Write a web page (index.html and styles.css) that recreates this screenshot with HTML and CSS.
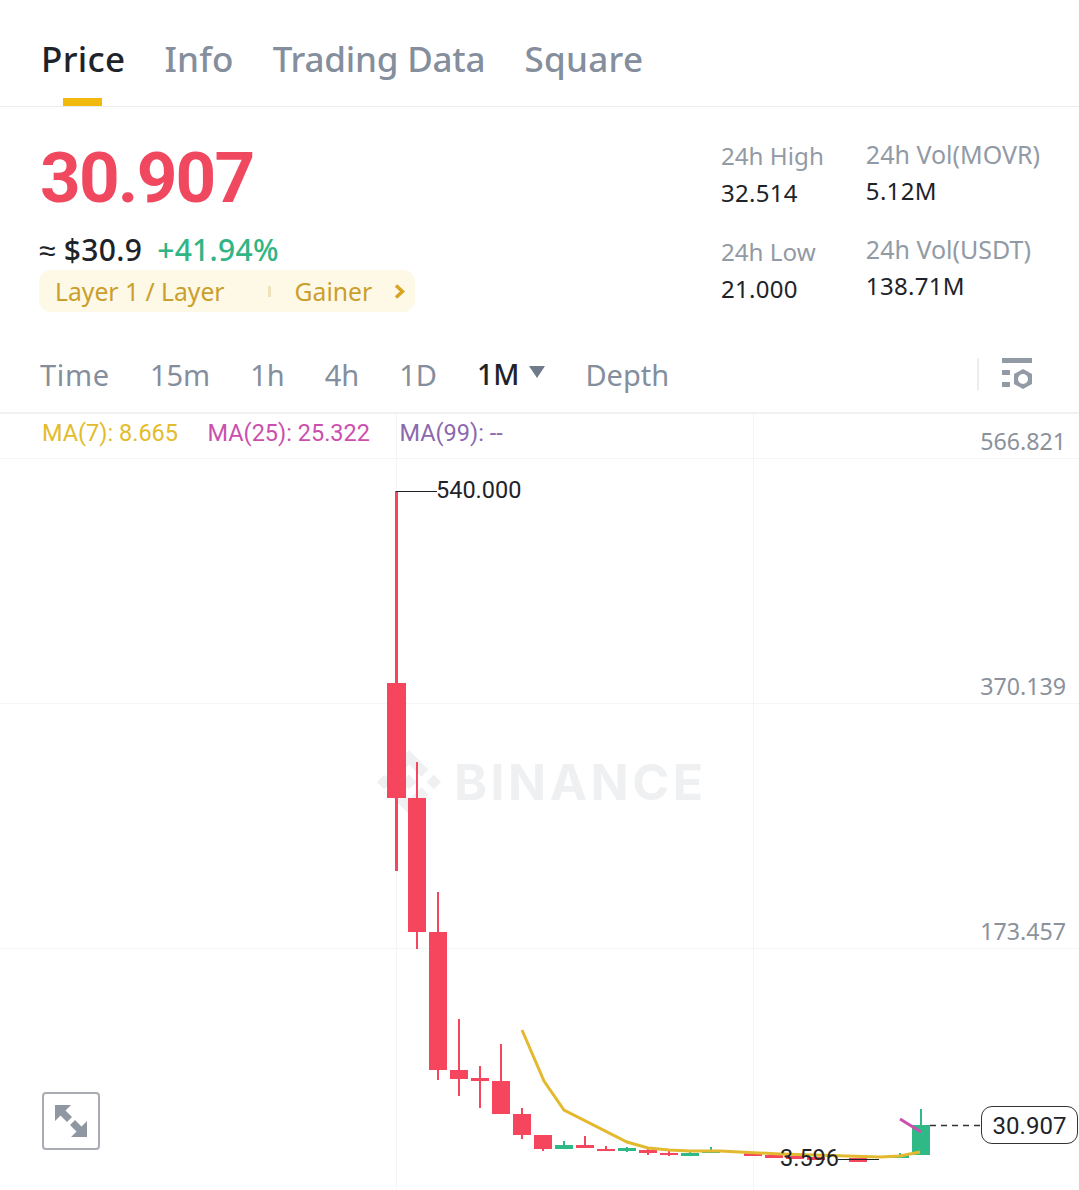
FILE: index.html
```html
<!DOCTYPE html>
<html lang="en">

<head>
    <meta charset="UTF-8">
    <meta name="viewport" content="width=device-width, initial-scale=1.0">
    <title>MOVR/USDT</title>
    <link rel="stylesheet" href="styles.css">
</head>

<body>
    <nav class="tabs">
        <a class="tab active">Price</a>
        <a class="tab">Info</a>
        <a class="tab tab-long">Trading Data</a>
        <a class="tab">Square</a>
    </nav>

    <section class="summary">
        <div class="summary-left">
            <div class="last-price">30.907</div>
            <div class="fiat-row">
                <span class="fiat">≈ $30.9</span>
                <span class="change">+41.94%</span>
            </div>
            <div class="tags">
                <span>Layer 1 / Layer</span>
                <i class="tag-sep"></i>
                <span>Gainer</span>
                <svg class="tag-arrow" width="11" height="15" viewBox="0 0 11 15">
                    <path d="M2 1.500l6.500 6-6.500 6" fill="none" stroke="#d9a520" stroke-width="3.500"/>
                </svg>
            </div>
        </div>
        <div class="stats">
            <div class="stat-col stat-col-low">
                <div class="stat">
                    <div class="stat-label">24h High</div>
                    <div class="stat-value">32.514</div>
                </div>
                <div class="stat">
                    <div class="stat-label">24h Low</div>
                    <div class="stat-value">21.000</div>
                </div>
            </div>
            <div class="stat-col">
                <div class="stat">
                    <div class="stat-label">24h Vol(MOVR)</div>
                    <div class="stat-value">5.12M</div>
                </div>
                <div class="stat">
                    <div class="stat-label">24h Vol(USDT)</div>
                    <div class="stat-value">138.71M</div>
                </div>
            </div>
        </div>
    </section>

    <div class="toolbar">
        <a class="period period-time">Time</a>
        <a class="period">15m</a>
        <a class="period">1h</a>
        <a class="period">4h</a>
        <a class="period">1D</a>
        <a class="period selected">1M<i class="caret"></i></a>
        <a class="period">Depth</a>
        <div class="toolbar-right">
            <svg width="32" height="32" viewBox="0 0 32 32">
                <path d="M1 0h30v5H1zM1 12h8v5H1zM1 24h8v5H1z" fill="#929aa5"/>
                <path d="M22 11l9 5v10l-9 5-9-5V16z" fill="#929aa5"/>
                <circle cx="22" cy="21" r="5" fill="#fff"/>
            </svg>
        </div>
    </div>

    <div class="chart">
        <div class="legend">
            <span class="ma7">MA(7): 8.665</span>
            <span class="ma25">MA(25): 25.322</span>
            <span class="ma99">MA(99): --</span>
        </div>

        <!-- viewBox uses page coordinates -->
        <svg class="plot" width="1079" height="776" viewBox="0 414 1079 776">
            <path class="grid" d="M0 458.5H1079M0 703.5H1079M0 948.5H1079M396.5 414V1190M753.5 414V1190"/>

            <path class="mark" transform="translate(377 750) scale(2)" d="M9.8 13.4L16 7.2l6.2 6.2 3.6-3.6L16 0 6.2 9.8l3.6 3.6zM0 16l3.6-3.6L7.2 16l-3.6 3.6L0 16zm9.8 2.6L16 24.8l6.2-6.2 3.6 3.6L16 32l-9.8-9.8 3.6-3.6zM24.8 16l3.6-3.6L32 16l-3.6 3.6-3.6-3.6zm-5.1 0L16 12.3 12.3 16l3.7 3.7 3.7-3.7z"/>
            <text class="mark-text" x="454" y="800">BINANCE</text>

            <g class="down">
                <rect x="395" y="491" width="3" height="380"/><rect x="387" y="683" width="19" height="115"/>
                <rect x="416" y="762" width="2" height="187"/><rect x="408" y="798" width="18" height="134"/>
                <rect x="437" y="892" width="2" height="188"/><rect x="429" y="932" width="18" height="138"/>
                <rect x="458" y="1019" width="2" height="77"/><rect x="450" y="1070" width="18" height="9"/>
                <rect x="479" y="1066" width="2" height="42"/><rect x="471" y="1078" width="18" height="3"/>
                <rect x="500" y="1044" width="2" height="40"/><rect x="492" y="1081" width="18" height="33"/>
                <rect x="521" y="1108" width="2" height="31"/><rect x="513" y="1114" width="18" height="21"/>
                <rect x="542" y="1135" width="2" height="16"/><rect x="534" y="1135" width="18" height="14"/>
                <rect x="584" y="1136" width="2" height="12"/><rect x="576" y="1145" width="18" height="3"/>
                <rect x="605" y="1146" width="2" height="5"/><rect x="597" y="1149" width="18" height="2"/>
                <rect x="647" y="1148" width="2" height="7"/><rect x="639" y="1150" width="18" height="3"/>
                <rect x="668" y="1151" width="2" height="5"/><rect x="660" y="1153" width="18" height="2"/>
                <rect x="744" y="1153" width="18" height="3"/>
                <rect x="765" y="1155" width="18" height="3"/>
                <rect x="786" y="1156" width="18" height="3"/>
                <rect x="807" y="1157" width="18" height="3"/>
                <rect x="849" y="1158" width="18" height="4"/>
            </g>
            <g class="up">
                <rect x="563" y="1141" width="2" height="5"/><rect x="555" y="1145" width="18" height="4"/>
                <rect x="626" y="1147" width="2" height="5"/><rect x="618" y="1148" width="18" height="3"/>
                <rect x="681" y="1153" width="18" height="3"/><rect x="689" y="1151" width="2" height="3"/>
                <rect x="710" y="1147" width="2" height="5"/><rect x="702" y="1150" width="18" height="3"/>
                <rect x="899" y="1153" width="2" height="4"/><rect x="891" y="1155" width="18" height="3"/>
                <rect x="920" y="1109" width="2" height="18"/><rect x="912" y="1125" width="18" height="30"/>
            </g>

            <polyline class="ma-line ma-yellow" points="522,1030 544,1081 564,1110 627,1142 648,1148 669,1150 690,1151 720,1151 780,1154 847,1156 880,1157 900,1156 920,1152"/>
            <polyline class="ma-line ma-pink" points="900,1119 921,1132"/>

            <path class="leader" d="M396 491.5H437M838 1159.5H879"/>
            <text class="extreme" x="436" y="498">540.000</text>
            <text class="extreme" x="780" y="1166">3.596</text>

            <text class="axis" x="1066" y="450">566.821</text>
            <text class="axis" x="1066" y="695">370.139</text>
            <text class="axis" x="1066" y="940">173.457</text>

            <path class="last-line" d="M930 1125.5H981"/>
        </svg>

        <div class="last-tag">30.907</div>

        <button class="expand">
            <svg width="34" height="34" viewBox="0 0 34 34">
                <path d="M1 1h16L11.5 6.500 18 13l-5 5-6.500-6.500L1 17zM33 33H17l5.500-5.500L16 21l5-5 6.500 6.500L33 17z" fill="#8f97a3"/>
            </svg>
        </button>
    </div>
</body>

</html>
```

FILE: styles.css
```css
*,
::before,
::after {
    box-sizing: border-box;
    margin: 0;
    padding: 0;
}

body {
    width: 1079px;
    height: 1190px;
    overflow: hidden;
    background: #fff;
    color: #1e2329;
    font-family: "Noto Sans", sans-serif;
}

/* tabs */
.tabs {
    display: flex;
    gap: 39px;
    height: 107px;
    padding: 36px 0 0 41px;
    border-bottom: 1px solid #eaecef;
}

.tab {
    position: relative;
    height: 70px;
    font-size: 35px;
    line-height: 45px;
    font-weight: 500;
    letter-spacing: 0.3px;
    color: #848e9c;
}

.tab-long {
    letter-spacing: -0.200px;
}

.tab.active {
    color: #1e2329;
}

.tab.active::after {
    content: "";
    position: absolute;
    left: 22px;
    bottom: 0;
    width: 39px;
    height: 8px;
    background: #f0b90b;
}

/* price + stats */
.summary {
    display: flex;
    justify-content: space-between;
    height: 233px;
    padding: 0 39px;
}

.last-price {
    height: 126px;
    padding: 29px 0 0 1px;
    font-family: Roboto, sans-serif;
    font-size: 71px;
    line-height: 84px;
    font-weight: 700;
    letter-spacing: -1.800px;
    color: #f0485f;
}

.fiat-row {
    display: flex;
    gap: 15px;
    height: 37px;
    font-size: 30px;
    line-height: 34px;
    font-weight: 500;
    letter-spacing: 0.300px;
}

.change {
    color: #32b585;
}

.tags {
    display: flex;
    align-items: center;
    width: 376px;
    height: 42px;
    padding-left: 16px;
    background: #fef8e6;
    border-radius: 12px;
    font-size: 24.7px;
    color: #c99f2e;
}

.tag-sep {
    width: 3px;
    height: 11px;
    margin: 0 24px 0 43px;
    background: #eee3bd;
}

.tag-arrow {
    margin-left: 22px;
}

.stats {
    display: flex;
    gap: 42px;
}

.stat-col {
    padding-top: 30px;
}

.stat-col-low {
    padding-top: 32px;
}

.stat-col-low .stat {
    height: 96px;
}

.stat-col-low .stat-label {
    font-size: 24.200px;
}

.stat {
    height: 95px;
}

.stat-label {
    font-size: 25px;
    line-height: 34px;
    color: #929aa5;
}

.stat-value {
    font-size: 24px;
    line-height: 40px;
    letter-spacing: 0.300px;
}

/* period toolbar */
.toolbar {
    display: flex;
    align-items: center;
    gap: 40px;
    height: 74px;
    padding: 0 46px 4px 40px;
    border-bottom: 2px solid #f0f1f2;
}

.period {
    font-size: 29px;
    color: #848e9c;
}

.period-time {
    letter-spacing: 0.700px;
}

.period.selected {
    display: flex;
    gap: 10px;
    font-size: 28.500px;
    font-weight: 500;
    color: #1e2329;
}

.caret {
    width: 0;
    height: 0;
    margin-top: 11px;
    border-left: 8px solid transparent;
    border-right: 8px solid transparent;
    border-top: 12px solid #6f7a8a;
}

.toolbar-right {
    display: flex;
    justify-content: flex-end;
    margin-left: auto;
    padding-left: 22px;
    border-left: 2px solid #eaecef;
}

/* chart */
.chart {
    position: relative;
    height: 776px;
}

.plot {
    display: block;
}

.legend {
    position: absolute;
    top: 2px;
    left: 42px;
    display: flex;
    gap: 29.500px;
    font-family: Roboto, sans-serif;
    font-size: 23.500px;
    line-height: 34px;
}

.ma7 {
    color: #e3bc2c;
}

.ma25 {
    color: #cb50ad;
}

.ma99 {
    color: #8c69ad;
}

.grid {
    fill: none;
    stroke: #f5f5f5;
    stroke-width: 1;
}

.mark {
    fill: #eff0f1;
}

.mark-text {
    font-family: Inter, sans-serif;
    font-size: 50px;
    font-weight: 700;
    letter-spacing: 3.500px;
    fill: #eff0f1;
}

.down {
    fill: #f6465d;
}

.up {
    fill: #2fb987;
}

.ma-line {
    fill: none;
    stroke-width: 3;
}

.ma-yellow {
    stroke: #e3b92f;
}

.ma-pink {
    stroke: #cb50ad;
}

.leader {
    fill: none;
    stroke: #1e2329;
    stroke-width: 1;
}

.extreme {
    font-family: Roboto, sans-serif;
    font-size: 23.500px;
    fill: #1e2329;
}

.axis {
    font-family: "Noto Sans", sans-serif;
    font-size: 23.200px;
    text-anchor: end;
    fill: #8b929c;
}

.last-line {
    fill: none;
    stroke: #333;
    stroke-width: 1.500;
    stroke-dasharray: 6 5;
}

.last-tag {
    position: absolute;
    top: 692px;
    left: 981px;
    width: 97px;
    height: 38px;
    border: 1.500px solid #333;
    border-radius: 11px;
    background: #fff;
    font-family: Roboto, sans-serif;
    font-size: 24px;
    line-height: 38px;
    text-align: center;
}

.expand {
    position: absolute;
    top: 678px;
    left: 42px;
    display: flex;
    align-items: center;
    justify-content: center;
    width: 58px;
    height: 58px;
    border: 2px solid #a9adb3;
    border-radius: 4px;
    background: #fff;
}
```
